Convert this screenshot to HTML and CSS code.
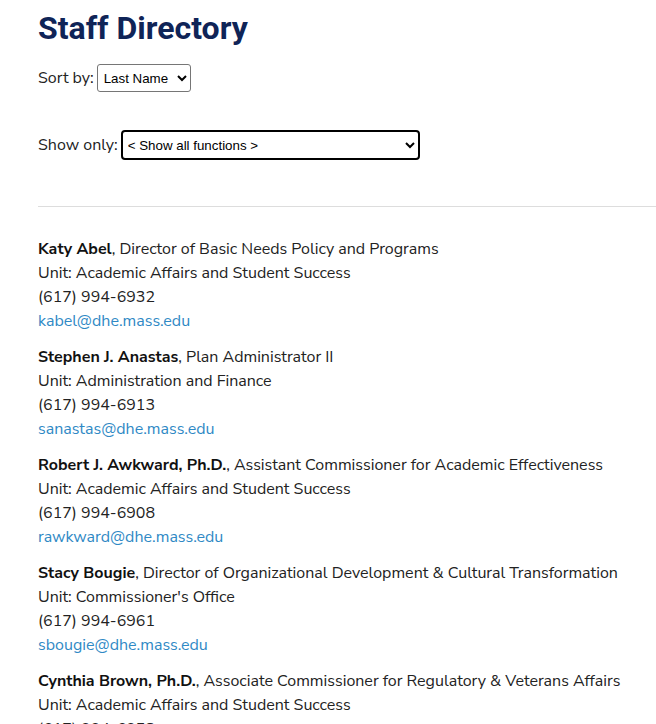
FILE: index.html
```html
<!DOCTYPE html>
<html lang="en">
<head>
<meta charset="utf-8">
<title>Staff Directory</title>
<link rel="stylesheet" href="styles.css">
</head>
<body>
<main class="page">
  <h1 class="title">Staff Directory</h1>
  <div class="filter sort">
    <label for="sort">Sort by:</label>
    <select id="sort" class="sel sel-sort"><option>Last Name</option></select>
  </div>
  <div class="filter show">
    <label for="func">Show only:</label>
    <select id="func" class="sel sel-func"><option>&lt; Show all functions &gt;</option></select>
  </div>
  <hr class="rule">
  <ul class="staff">
    <li class="person">
      <div><strong>Katy Abel</strong>, Director of Basic Needs Policy and Programs</div>
      <div>Unit: Academic Affairs and Student Success</div>
      <div>(617) 994-6932</div>
      <a href="#">kabel@dhe.mass.edu</a>
    </li>
    <li class="person">
      <div><strong>Stephen J. Anastas</strong>, Plan Administrator II</div>
      <div>Unit: Administration and Finance</div>
      <div>(617) 994-6913</div>
      <a href="#">sanastas@dhe.mass.edu</a>
    </li>
    <li class="person">
      <div><strong>Robert J. Awkward, Ph.D.</strong>, Assistant Commissioner for Academic Effectiveness</div>
      <div>Unit: Academic Affairs and Student Success</div>
      <div>(617) 994-6908</div>
      <a href="#">rawkward@dhe.mass.edu</a>
    </li>
    <li class="person">
      <div><strong>Stacy Bougie</strong>, Director of Organizational Development &amp; Cultural Transformation</div>
      <div>Unit: Commissioner's Office</div>
      <div>(617) 994-6961</div>
      <a href="#">sbougie@dhe.mass.edu</a>
    </li>
    <li class="person">
      <div><strong>Cynthia Brown, Ph.D.</strong>, Associate Commissioner for Regulatory &amp; Veterans Affairs</div>
      <div>Unit: Academic Affairs and Student Success</div>
      <div>(617) 994-6953</div>
      <a href="#">cbrown@dhe.mass.edu</a>
    </li>
  </ul>
</main>
</body>
</html>
```

FILE: styles.css
```css
html, body {
  margin: 0;
  padding: 0;
  background: #fff;
}
body {
  font-family: "Nunito Sans", Lato, "Open Sans", sans-serif;
  font-size: 16px;
  line-height: 24px;
  color: #222;
  overflow: hidden;
}
.page {
  padding: 0 0 0 38px;
}
.title {
  font-family: Roboto, "Liberation Sans", sans-serif;
  font-weight: 700;
  font-size: 32px;
  line-height: 40px;
  color: #0f2457;
  margin: 8px 0 0 0;
}
.filter {
  display: flex;
  align-items: center;
  gap: 3px;
}
.sort {
  margin-top: 16px;
}
.show {
  margin-top: 38px;
}
.sel {
  font-family: "Liberation Sans", Arial, sans-serif;
  font-size: 13.33px;
  color: #000;
  background: #fff;
}
.sel-sort {
  height: 28px;
  width: 94px;
  border: 1px solid #767676;
  border-radius: 3px;
  padding: 0 2px;
}
.sel-func {
  height: 30px;
  width: 299px;
  border: 2px solid #000;
  border-radius: 4px;
  padding: 0 1px;
}
.rule {
  border: 0;
  border-top: 1px solid #ddd;
  margin: 46px 0 0 0;
  height: 0;
}
.staff {
  list-style: none;
  margin: 30px 0 0 0;
  padding: 0;
}
.person {
  margin-bottom: 12px;
}
.person strong {
  font-weight: 700;
  color: #111;
}
.person a {
  color: #2f89c5;
  text-decoration: none;
}
```
